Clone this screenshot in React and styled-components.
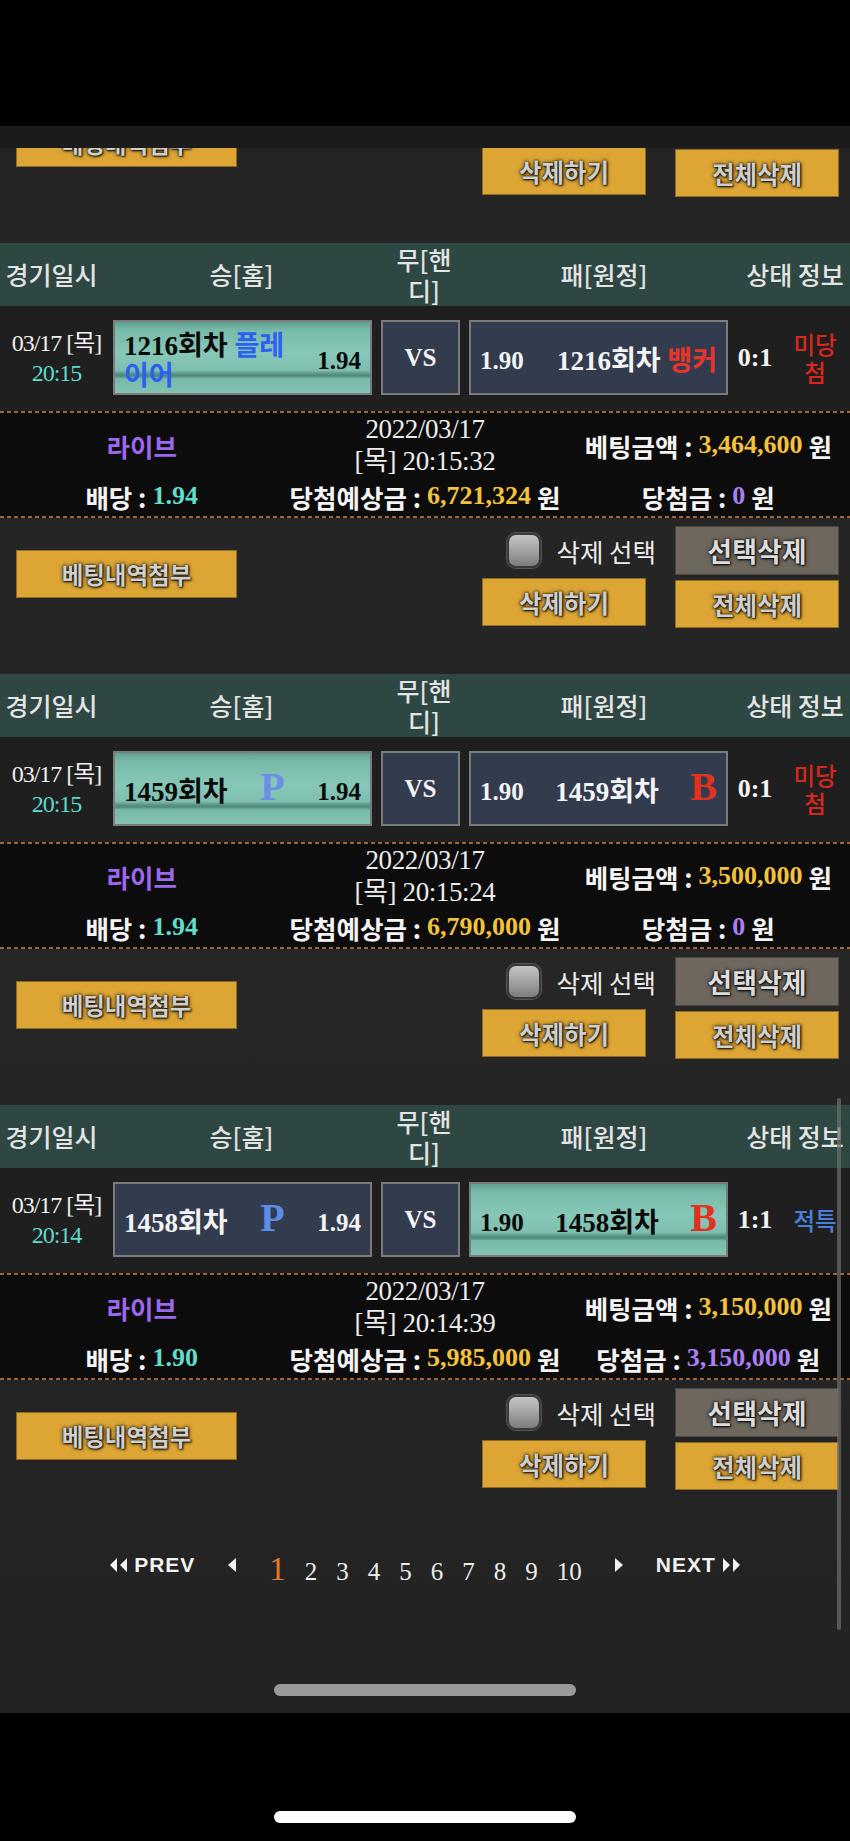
import React from 'react';
import styled, { createGlobalStyle } from 'styled-components';

const SERIF = "'Liberation Serif', 'Noto Sans CJK KR', serif";
const SANS = "'Noto Sans CJK KR', 'Noto Sans', sans-serif";

const bets = [
  {
    round: 1216, date: '03/17 [목]', time: '20:15', letters: false, pick: 'home',
    homeOdds: '1.94', awayOdds: '1.90', score: '0:1', result: '미당첨', won: false,
    betDate: '2022/03/17', betTime: '[목] 20:15:32',
    amount: '3,464,600', odds: '1.94', expected: '6,721,324', prize: '0',
  },
  {
    round: 1459, date: '03/17 [목]', time: '20:15', letters: true, pick: 'home',
    homeOdds: '1.94', awayOdds: '1.90', score: '0:1', result: '미당첨', won: false,
    betDate: '2022/03/17', betTime: '[목] 20:15:24',
    amount: '3,500,000', odds: '1.94', expected: '6,790,000', prize: '0',
  },
  {
    round: 1458, date: '03/17 [목]', time: '20:14', letters: true, pick: 'away',
    homeOdds: '1.94', awayOdds: '1.90', score: '1:1', result: '적특', won: true,
    betDate: '2022/03/17', betTime: '[목] 20:14:39',
    amount: '3,150,000', odds: '1.90', expected: '5,985,000', prize: '3,150,000',
  },
];

const GlobalStyle = createGlobalStyle`
  html, body {
    margin: 0;
    padding: 0;
    background: #000;
  }
  body {
    font-family: ${SANS};
  }
`;

const ActionArea = () => (
  <Actions>
    <AttachButton>베팅내역첨부</AttachButton>
    <ActionGroup>
      <ActionRow>
        <CheckLabel>
          <CheckBox />
          삭제 선택
        </CheckLabel>
        <GrayButton>선택삭제</GrayButton>
      </ActionRow>
      <ActionRow $gap={29}>
        <GoldButton>삭제하기</GoldButton>
        <GoldButton $offset={2}>전체삭제</GoldButton>
      </ActionRow>
    </ActionGroup>
  </Actions>
);

const HomeContent = ({ bet, selected }) =>
  bet.letters ? (
    <>
      <Round>{bet.round}회차</Round>
      <Letter $color={selected ? '#6b8ee6' : '#5d8de4'}>P</Letter>
      <Odds>{bet.homeOdds}</Odds>
    </>
  ) : (
    <>
      <Round>
        {bet.round}회차 <Side $color="#2b60f2">플레이어</Side>
      </Round>
      <Odds>{bet.homeOdds}</Odds>
    </>
  );

const AwayContent = ({ bet }) =>
  bet.letters ? (
    <>
      <Odds>{bet.awayOdds}</Odds>
      <Round>{bet.round}회차</Round>
      <Letter $color="#e2321f">B</Letter>
    </>
  ) : (
    <>
      <Odds>{bet.awayOdds}</Odds>
      <Round>
        {bet.round}회차 <Side $color="#e8352a">뱅커</Side>
      </Round>
    </>
  );

const BetCard = ({ bet }) => (
  <>
    <HeaderRow>
      <HeadCell>경기일시</HeadCell>
      <HeadCell>승[홈]</HeadCell>
      <HeadCell $narrow>무[핸디]</HeadCell>
      <HeadCell>패[원정]</HeadCell>
      <HeadCell>상태 정보</HeadCell>
    </HeaderRow>
    <MatchRow>
      <DateCell>
        <div>{bet.date}</div>
        <Time>{bet.time}</Time>
      </DateCell>
      <PickBox $selected={bet.pick === 'home'}>
        <HomeContent bet={bet} selected={bet.pick === 'home'} />
      </PickBox>
      <VsBox>VS</VsBox>
      <PickBox $selected={bet.pick === 'away'}>
        <AwayContent bet={bet} />
      </PickBox>
      <Score>{bet.score}</Score>
      <Status $won={bet.won}>{bet.result}</Status>
    </MatchRow>
    <InfoSection>
      <InfoCell>
        <Live>라이브</Live>
      </InfoCell>
      <BetDate>
        {bet.betDate}
        <br />
        {bet.betTime}
      </BetDate>
      <InfoCell>
        베팅금액 : <Amount $color="#f3c23c">{bet.amount}</Amount> 원
      </InfoCell>
      <InfoCell>
        배당 : <Amount $color="#62dccb">{bet.odds}</Amount>
      </InfoCell>
      <InfoCell>
        당첨예상금 : <Amount $color="#f3c23c">{bet.expected}</Amount> 원
      </InfoCell>
      <InfoCell>
        당첨금 : <Amount $color="#a97ff0">{bet.prize}</Amount> 원
      </InfoCell>
    </InfoSection>
    <ActionArea />
  </>
);

const LeftDouble = () => (
  <svg width="20" height="14" viewBox="0 0 20 14">
    <path d="M8 0v14L1 7zM18 0v14L11 7z" fill="#f2f2f2" />
  </svg>
);

const RightDouble = () => (
  <svg width="20" height="14" viewBox="0 0 20 14">
    <path d="M2 0v14l7-7zM12 0v14l7-7z" fill="#f2f2f2" />
  </svg>
);

const SingleArrow = ({ right }) => (
  <svg width="10" height="14" viewBox="0 0 10 14">
    <path d={right ? 'M1 0v14l8-7z' : 'M9 0v14L1 7z'} fill="#f2f2f2" />
  </svg>
);

const App = () => {
  return (
    <Phone>
      <GlobalStyle />
      <StatusBar />
      <TopStrip />
      <Viewport>
        <Content>
          <ActionArea />
          {bets.map((bet) => (
            <BetCard key={bet.round} bet={bet} />
          ))}
          <Pagination>
            <PageNav>
              <LeftDouble />
              PREV
            </PageNav>
            <SingleArrow />
            <Numbers>
              {[1, 2, 3, 4, 5, 6, 7, 8, 9, 10].map((n) => (
                <PageNum key={n} $active={n === 1}>{n}</PageNum>
              ))}
            </Numbers>
            <SingleArrow right />
            <PageNav>
              NEXT
              <RightDouble />
            </PageNav>
          </Pagination>
        </Content>
        <ScrollThumb />
        <ToolbarHandle />
      </Viewport>
      <BottomBar>
        <HomeIndicator />
      </BottomBar>
    </Phone>
  );
};

export default App;

const Phone = styled.div`
  width: 850px;
  height: 1841px;
  background: #000;
  display: flex;
  flex-direction: column;
  overflow: hidden;
`;

const StatusBar = styled.div`
  height: 126px;
  flex-shrink: 0;
  background: #000;
`;

const TopStrip = styled.div`
  height: 22px;
  flex-shrink: 0;
  background: #1b1b1b;
`;

const Viewport = styled.div`
  position: relative;
  height: 1565px;
  flex-shrink: 0;
  overflow: hidden;
  background: linear-gradient(180deg, #242424 0%, #262626 50%, #232323 100%);
`;

const Content = styled.div`
  margin-top: -61px;
`;

const HeaderRow = styled.div`
  display: grid;
  grid-template-columns: 103px 277px 88px 272px 1fr;
  align-items: center;
  height: 63px;
  background: #2e4743;
  color: #e4e4e4;
  font-family: ${SANS};
  font-weight: 500;
  font-size: 25px;
  line-height: 31px;
`;

const HeadCell = styled.div`
  text-align: center;
  white-space: ${({ $narrow }) => ($narrow ? 'normal' : 'nowrap')};
  padding: ${({ $narrow }) => ($narrow ? '0 11px' : '0')};
`;

const MatchRow = styled.div`
  display: flex;
  align-items: center;
  height: 105px;
  padding-bottom: 2px;
  box-sizing: border-box;
  background: #1f1f1f;
`;

const DateCell = styled.div`
  width: 113px;
  flex-shrink: 0;
  text-align: center;
  font-family: ${SERIF};
  font-size: 24px;
  letter-spacing: -1px;
  line-height: 30px;
  color: #f0f0f0;
`;

const Time = styled.div`
  color: #5fd9c9;
`;

const PickBox = styled.div`
  width: 259px;
  height: 75px;
  flex-shrink: 0;
  box-sizing: border-box;
  padding: 6px 9px 0 9px;
  display: flex;
  align-items: center;
  justify-content: space-between;
  gap: 14px;
  border: 2px solid #7b7b7b;
  color: ${({ $selected }) => ($selected ? '#0a0a0a' : '#f4f4f4')};
  background: ${({ $selected }) =>
    $selected
      ? 'linear-gradient(180deg, #5f9f91 0%, #79bbab 12%, #86c7b7 45%, #7fbfaf 68%, #5a9486 73%, #4f887b 76%, #78b9a9 80%, #82c3b3 100%)'
      : '#333b4f'};
`;

const Round = styled.span`
  flex: 0 1 auto;
  min-width: 0;
  font-family: ${SERIF};
  font-weight: 700;
  font-size: 27px;
  line-height: 30px;
`;

const Side = styled.span`
  color: ${({ $color }) => $color};
`;

const Letter = styled.span`
  flex-shrink: 0;
  margin-bottom: 10px;
  font-family: ${SERIF};
  font-weight: 700;
  font-size: 40px;
  line-height: 40px;
  color: ${({ $color }) => $color};
`;

const Odds = styled.span`
  flex-shrink: 0;
  font-family: ${SERIF};
  font-weight: 700;
  font-size: 25px;
  line-height: 30px;
`;

const VsBox = styled.div`
  width: 79px;
  height: 75px;
  flex-shrink: 0;
  box-sizing: border-box;
  margin: 0 9px;
  display: flex;
  align-items: center;
  justify-content: center;
  border: 2px solid #7b7b7b;
  background: #333b4f;
  color: #f4f4f4;
  font-family: ${SERIF};
  font-weight: 700;
  font-size: 25px;
`;

const Score = styled.div`
  width: 54px;
  flex-shrink: 0;
  text-align: center;
  color: #f4f4f4;
  font-family: ${SERIF};
  font-weight: 700;
  font-size: 26px;
`;

const Status = styled.div`
  flex: 1;
  padding: 0 10px 0 8px;
  text-align: center;
  font-family: ${SANS};
  font-weight: 500;
  font-size: 23.5px;
  line-height: 28px;
  color: ${({ $won }) => ($won ? '#4a80dc' : '#d8281e')};
`;

const InfoSection = styled.div`
  display: grid;
  grid-template-columns: repeat(3, 1fr);
  grid-template-rows: 64px 32px;
  row-gap: 3px;
  height: 107px;
  box-sizing: border-box;
  padding: 2px 0 0;
  background-color: #0c0c0c;
  background-image: repeating-linear-gradient(90deg, #a3643a 0 4px, transparent 4px 7px),
    repeating-linear-gradient(90deg, #a3643a 0 4px, transparent 4px 7px);
  background-size: 100% 2px, 100% 2px;
  background-position: 0 0, 0 100%;
  background-repeat: no-repeat;
`;

const InfoCell = styled.div`
  display: flex;
  align-items: center;
  justify-content: center;
  gap: 6px;
  white-space: nowrap;
  color: #f4f4f4;
  font-family: ${SANS};
  font-weight: 700;
  font-size: 25.5px;
`;

const Live = styled.span`
  color: #9b68ee;
`;

const BetDate = styled.div`
  grid-row: 1;
  grid-column: 2;
  text-align: center;
  font-family: ${SERIF};
  font-size: 27px;
  letter-spacing: -0.4px;
  line-height: 32px;
  color: #ececec;
`;

const Amount = styled.span`
  font-family: ${SERIF};
  font-weight: 700;
  font-size: 26px;
  color: ${({ $color }) => $color};
`;

const Actions = styled.div`
  height: 156px;
  box-sizing: border-box;
  display: flex;
  justify-content: space-between;
  align-items: flex-start;
  padding: 8px 11px 0 16px;
`;

const ActionGroup = styled.div`
  display: flex;
  flex-direction: column;
  gap: 3px;
`;

const ActionRow = styled.div`
  display: flex;
  align-items: flex-start;
  justify-content: flex-end;
  gap: ${({ $gap }) => $gap || 19}px;
`;

const CheckLabel = styled.label`
  display: flex;
  align-items: center;
  gap: 15px;
  height: 49px;
  color: #ececec;
  font-family: ${SANS};
  font-size: 25.5px;
`;

const CheckBox = styled.span`
  width: 34px;
  height: 35px;
  box-sizing: border-box;
  border-radius: 9px;
  border: 2px solid #3a3a3a;
  background: linear-gradient(180deg, #c4c4c4 0%, #a3a3a3 50%, #7c7c7c 100%);
  box-shadow: 0 0 0 1px #555;
`;

const buttonText = `
  display: flex;
  align-items: center;
  justify-content: center;
  box-sizing: border-box;
  font-family: ${SANS};
  font-weight: 700;
  color: #cfcfcf;
  text-shadow: 0 0 2px rgba(0, 0, 0, 0.95), 0 0 4px rgba(0, 0, 0, 0.7), 1px 1px 2px rgba(0, 0, 0, 0.8);
`;

const GoldButton = styled.div`
  ${buttonText}
  width: 164px;
  height: 48px;
  margin-top: ${({ $offset }) => $offset || 0}px;
  background: #dca534;
  border: 1px solid #8f6a22;
  font-size: 24.5px;
`;

const AttachButton = styled(GoldButton)`
  width: 221px;
  margin-top: 24px;
  font-size: 23.5px;
`;

const GrayButton = styled.div`
  ${buttonText}
  width: 164px;
  height: 49px;
  background: #6e675d;
  border: 1px solid #4a4640;
  font-size: 27px;
  color: #dcdcdc;
`;

const Pagination = styled.div`
  display: flex;
  align-items: center;
  justify-content: center;
  gap: 32px;
  height: 58px;
`;

const PageNav = styled.div`
  display: flex;
  align-items: center;
  gap: 5px;
  color: #f2f2f2;
  font-family: 'Liberation Sans', Arial, sans-serif;
  font-weight: 700;
  font-size: 21px;
  letter-spacing: 1px;
`;

const Numbers = styled.div`
  display: flex;
  align-items: baseline;
  gap: 19px;
  margin-top: 8px;
`;

const PageNum = styled.span`
  font-family: ${SERIF};
  font-size: ${({ $active }) => ($active ? 33 : 25)}px;
  color: ${({ $active }) => ($active ? '#e8782a' : '#ececec')};
  line-height: 1;
`;

const ScrollThumb = styled.div`
  position: absolute;
  right: 9px;
  top: 950px;
  width: 4px;
  height: 532px;
  border-radius: 2px;
  background: rgba(110, 110, 110, 0.7);
`;

const ToolbarHandle = styled.div`
  position: absolute;
  left: 274px;
  bottom: 17px;
  width: 302px;
  height: 12px;
  border-radius: 6px;
  background: #9a9a9a;
`;

const BottomBar = styled.div`
  flex: 1;
  background: #000;
  display: flex;
  justify-content: center;
`;

const HomeIndicator = styled.div`
  margin-top: 98px;
  width: 302px;
  height: 12px;
  border-radius: 6px;
  background: #fff;
`;
